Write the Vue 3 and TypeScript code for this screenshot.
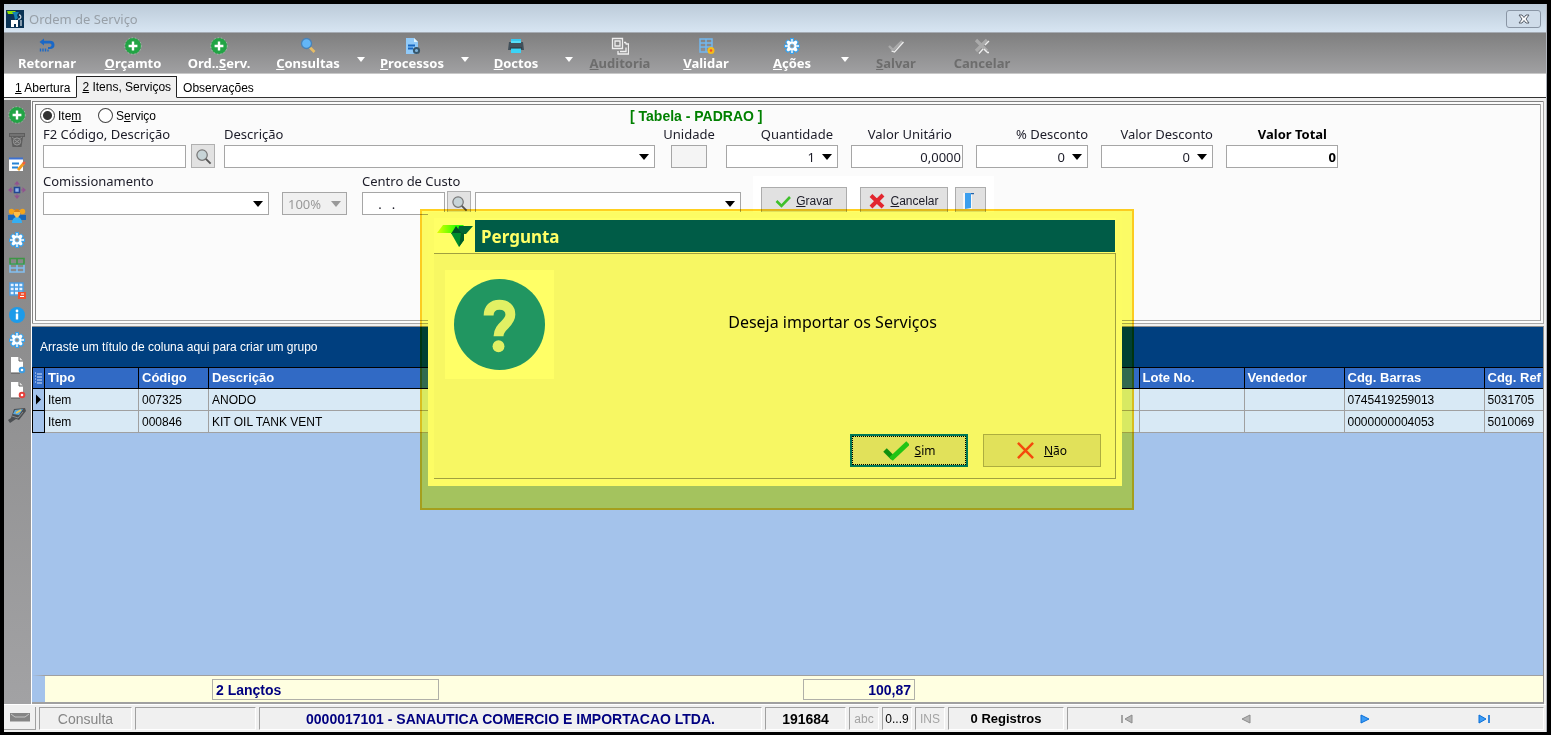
<script setup lang="ts">
import { ref } from 'vue'

interface Tool {
  icon: string
  pre: string
  key: string
  post: string
  menu?: boolean
  off?: boolean
  shift?: boolean
}

interface Row {
  tipo: string
  codigo: string
  descricao: string
  barras: string
  referencia: string
}

const plus =
  '<circle cx="9" cy="9" r="8" fill="#22a445"/><circle cx="9" cy="9" r="8.3" fill="none" stroke="#9fd3ac" stroke-width=".8" stroke-dasharray="1.4 2"/><path d="M9 4.6v8.8M4.6 9h8.8" stroke="#fff" stroke-width="2.4"/>'

const page = '<path d="M3 1h8l4 4v12H3z" fill="#fff"/><path d="M11 1v4h4" fill="#ddd" stroke="#555" stroke-width=".9"/><path d="M3 17h9" stroke="#555"/>'

const icons: Record<string, string> = {
  app: '<path d="M0 0h18v18H0z" fill="#0a3355"/><path d="M1 1h9l-3 3H2z" fill="#8ee000"/><path d="M6 2h7l-2 3 1 3-3 2-1-5z" fill="#1583b5"/><path d="M5 10h7v7h-2v-3H8v3H5z" fill="#fff"/><path d="M12 9c3 1 4-4 1-4M15 10v6" fill="none" stroke="#c9d5df" stroke-width="1.300"/>',
  back: '<path d="M6 1.500L1.500 5 6 8.500V6.400h6a1.500 1.500 0 0 1 1.500 1.500c0 1.500-1 2-2.500 2h-1v2h2c2.800 0 4.500-1.400 4.500-4S14.800 3.700 12 3.700H6z" fill="#1a68c7"/><path d="M2.500 11.500v3M5 11.500v3M7.500 11.500v3M10 12.500v2" stroke="#1a68c7" stroke-width="1.400"/>',
  plus,
  search: '<path d="M10.500 10l5 5" stroke="#e7bc64" stroke-width="2.600"/><circle cx="7.500" cy="6.500" r="5" fill="#63b6f7" stroke="#4b83b6" stroke-width="1.300"/>',
  doc: '<path d="M3 1h8l4 4v12H3z" fill="#90caf9"/><path d="M11 1v4h4z" fill="#e1f5fe"/><path d="M5 8.500h7M5 11.500h5" stroke="#1767c0" stroke-width="1.800"/><circle cx="13.500" cy="13.500" r="2.600" fill="#7fb2d8" stroke="#37566b" stroke-width="2"/>',
  printer: '<path d="M4 2h10v4H4z" fill="#37c8ef"/><path d="M2 5h14l1 8H1z" fill="#42505a"/><path d="M4 4h10v2H4z" fill="#56dcf5"/><path d="M4 11h10v5H4z" fill="#3bd3f5"/><path d="M3 11h12" stroke="#263238"/>',
  audit: '<path d="M1.500 1.500h10v10h-10zM4 4h5v5H4zM13 5.500h2M15 5.500v2M7 14v3h10.500V7H15M9 14.500h6v-4" fill="none" stroke="#eee" stroke-width="1.300"/>',
  grid: '<path d="M3 2h12v13H3zM9 2v13M3 6h12M3 10h12" fill="none" stroke="#72b8ef" stroke-width="1.500"/><circle cx="14" cy="13.500" r="2.400" fill="#f04b2f" stroke="#f5bc18" stroke-width="2.200"/>',
  gear: '<path d="M7 1h4v3l2.500-1.500 2.500 2.500-1.500 2.500H17v3.500h-2.500L16 13.500 13.500 16 11 14.500V17H7v-2.500L4.500 16 2 13.500 3.500 11H1V7.500h2.500L2 5l2.500-2.500L7 4z" fill="#3aa2ec"/><path d="M8.300 2h1.400v3l3.300-1.500 1.500 1.500L13 8.300h3v1.400h-3l1.500 3.300-1.500 1.500L9.700 13v3H8.300v-3L5 14.500 3.500 13 5 9.700H2V8.300h3L3.500 5 5 3.500 8.300 5z" fill="#fff"/><circle cx="9" cy="9" r="4" fill="#fff"/><circle cx="9" cy="9" r="2" fill="#8b8b8b" stroke="#5cb1ee" stroke-width=".8"/>',
  okOff: '<path d="M2 9l4 4 9-9" fill="none" stroke="#aaa" stroke-width="2.400"/><path d="M4.500 14l3 1 9-10" fill="none" stroke="#eee" stroke-width="1.300"/>',
  noOff: '<path d="M3 3l11 11M14 3L3 14" stroke="#aaa" stroke-width="3.200"/><path d="M6 16.500l4-4.500M12 8l4-4M11 12l3.500 3.500h1.500" fill="none" stroke="#eee" stroke-width="1.300"/>',
  trash: '<path d="M1 2h16v4h-2l-1.500 10h-9L3 6H1z" fill="#5d5d5d"/><path d="M2 4h14M4 6l4 3M14 6l-4 3" stroke="#888"/><circle cx="9" cy="10.500" r="3.600" fill="#666" stroke="#999"/><path d="M7 9l4 3M11 9l-4 3" stroke="#999"/>',
  edit: '<path d="M1 2h14v13H1z" fill="#fff"/><path d="M1 1.500h14v2H1z" fill="#3d70d0"/><path d="M4 7.500h7M4 11.500h6" stroke="#2783d6" stroke-width="2"/><path d="M10 14l6-7" stroke="#f29b20" stroke-width="2.800"/><path d="M15 8l2-2" stroke="#f25b40" stroke-width="2.400"/>',
  move: '<path d="M6.500 6.500h5v5h-5z" fill="#92b4ed" stroke="#234693" stroke-width="1.600"/><path d="M9 0l3 3.500H6zM9 18l3-3.500H6zM0 9l3.500-3v6zM18 9l-3.500-3v6z" fill="#91548f"/><path d="M9 3v2M9 13v2M3 9h2M13 9h2" stroke="#91548f"/>',
  people: '<circle cx="3.500" cy="5.500" r="2.700" fill="#f3a51c"/><circle cx="14.500" cy="5.500" r="2.700" fill="#f3a51c"/><path d="M0 14V9h7v5zM11 14V9h7v5z" fill="#1767bb"/><path d="M4 17c0-8 10-8 10 0z" fill="#36aef1"/><path d="M6 4h6v5l-3 3-3-3z" fill="#fdbf49"/><path d="M6 6a3 3 0 0 1 6 0z" fill="#d98218"/>',
  cells: '<path d="M2 8h14v8H2zM9 8v8M2 12h14" fill="none" stroke="#82bff0" stroke-width="1.600"/><path d="M2 2.500h14v5.500H2zM9 2.500V8" fill="none" stroke="#3c9644" stroke-width="1.600"/>',
  cellsDel: '<path d="M2 2h13v12H2z" fill="#e8f3fd"/><path d="M2 2h13v12H2zM6.300 2v12M10.700 2v12M2 6h13M2 10h13" fill="none" stroke="#4a9de2" stroke-width="1.400"/><path d="M10 11h8v7h-8z" fill="#f1502f"/><path d="M12 15.500h4M13 13h3" stroke="#fff" stroke-width="1.200"/>',
  info: '<circle cx="9" cy="9" r="8" fill="#1e9be9"/><circle cx="9" cy="5" r="1.400" fill="#fff"/><path d="M9 7.500v6" stroke="#fff" stroke-width="2.400"/>',
  pageGear: page + '<circle cx="14" cy="14" r="2.300" fill="#fff" stroke="#3d9be0" stroke-width="2"/>',
  pageRed: page + '<circle cx="14" cy="14" r="2.300" fill="#fff" stroke="#e5403c" stroke-width="2"/>',
  device: '<path d="M0 14l3-2 3-9 11-1 1 3-7 9-3-1-6 4z" fill="#4c4f52"/><path d="M7 4l8-1-4 6-6-1z" fill="#55a7e0"/><path d="M8 7l5-3" stroke="#eac454" stroke-width="1.600"/><path d="M4 10l6 2 5-6" fill="none" stroke="#888"/>',
}

const tools: Tool[] = [
  { icon: 'back', pre: 'Retornar', key: '', post: '' },
  { icon: 'plus', pre: '', key: 'O', post: 'rçamto' },
  { icon: 'plus', pre: 'Ord..', key: 'S', post: 'erv.' },
  { icon: 'search', pre: '', key: 'C', post: 'onsultas', menu: true, shift: true },
  { icon: 'doc', pre: '', key: 'P', post: 'rocessos', menu: true },
  { icon: 'printer', pre: '', key: 'D', post: 'octos', menu: true },
  { icon: 'audit', pre: '', key: 'A', post: 'uditoria', off: true },
  { icon: 'grid', pre: '', key: 'V', post: 'alidar' },
  { icon: 'gear', pre: '', key: 'A', post: 'ções', menu: true },
  { icon: 'okOff', pre: '', key: 'S', post: 'alvar', off: true },
  { icon: 'noOff', pre: 'Cancelar', key: '', post: '', off: true },
]

const side = [
  { icon: 'plus', name: 'Incluir' },
  { icon: 'trash', name: 'Excluir' },
  { icon: 'edit', name: 'Editar' },
  { icon: 'move', name: 'Mover' },
  { icon: 'people', name: 'Equipe' },
  { icon: 'gear', name: 'Configurar' },
  { icon: 'cells', name: 'Grade' },
  { icon: 'cellsDel', name: 'Limpar grade' },
  { icon: 'info', name: 'Informações' },
  { icon: 'gear', name: 'Opções' },
  { icon: 'pageGear', name: 'Documento' },
  { icon: 'pageRed', name: 'Remover documento' },
  { icon: 'device', name: 'Coletor' },
]

const rows: Row[] = [
  { tipo: 'Item', codigo: '007325', descricao: 'ANODO', barras: '0745419259013', referencia: '5031705' },
  { tipo: 'Item', codigo: '000846', descricao: 'KIT OIL TANK VENT', barras: '0000000004053', referencia: '5010069' },
]

const kind = ref('item')
const code = ref('')
const unit = ref('')
const cost = ref('   .   .')
const unitValue = ref('0,0000')
const total = ref('0')
</script>

<template>
  <div class="screen">
    <main class="window">
      <header class="titlebar">
        <svg class="app-icon" viewBox="0 0 18 18" v-html="icons.app"></svg>
        <h1>Ordem de Serviço</h1>
        <button class="close" aria-label="Fechar">
          <svg viewBox="0 0 14 10"><path d="M2 1h3l2 2.500L9 1h3L9 5l3 4H9L7 6.500 5 9H2l3-4z" fill="#fff" stroke="#555d68" /></svg>
        </button>
      </header>

      <nav class="toolbar">
        <div v-for="(t, i) in tools" :key="i" class="tool" :class="{ shift: t.shift }">
          <button class="tool-btn" :disabled="t.off">
            <svg viewBox="0 0 18 18" v-html="icons[t.icon]"></svg>
            <span>{{ t.pre }}<u>{{ t.key }}</u>{{ t.post }}</span>
          </button>
          <button v-if="t.menu" class="tool-menu" :aria-label="'Menu ' + t.key + t.post"></button>
        </div>
      </nav>

      <div class="tabs" role="tablist">
        <button role="tab"><u>1</u> Abertura</button>
        <button role="tab" class="active" aria-selected="true"><u>2</u> Itens, Serviços</button>
        <button role="tab">Observações</button>
      </div>

      <div class="body">
        <aside class="side">
          <button v-for="(s, i) in side" :key="i" :aria-label="s.name">
            <svg viewBox="0 0 18 18" v-html="icons[s.icon]"></svg>
          </button>
        </aside>

        <div class="content">
          <section class="panel">
            <div class="kinds">
              <label><input v-model="kind" type="radio" name="kind" value="item" />Ite<u>m</u></label>
              <label><input v-model="kind" type="radio" name="kind" value="servico" />S<u>e</u>rviço</label>
              <strong>[ Tabela - PADRAO ]</strong>
            </div>

            <div class="fields">
              <div class="field w-code">
                <label for="code">F2 Código, Descrição</label>
                <input id="code" v-model="code" type="text" />
              </div>
              <button class="lookup after-code" aria-label="Pesquisar item">
                <svg viewBox="0 0 18 18"><circle cx="7.500" cy="7.500" r="5.500" fill="#c7d4d7" stroke="#777" stroke-width="1.300" /><path d="M11.500 11.500l5 5" stroke="#555" stroke-width="2" /></svg>
              </button>
              <div class="field w-desc">
                <label for="desc">Descrição</label>
                <div class="combo"><select id="desc"><option></option></select></div>
              </div>
              <div class="field w-unit">
                <label for="unit">Unidade</label>
                <input id="unit" v-model="unit" type="text" disabled />
              </div>
              <div class="field w-num lbl-in">
                <label for="qty">Quantidade</label>
                <div class="combo num"><select id="qty"><option>1</option></select></div>
              </div>
              <div class="field w-num lbl-far">
                <label for="price">Valor Unitário</label>
                <input id="price" v-model="unitValue" type="text" class="num" />
              </div>
              <div class="field w-num">
                <label for="pct">% Desconto</label>
                <div class="combo num"><select id="pct"><option>0</option></select></div>
              </div>
              <div class="field w-num">
                <label for="disc">Valor Desconto</label>
                <div class="combo num"><select id="disc"><option>0</option></select></div>
              </div>
              <div class="field w-num lbl-far bold">
                <label for="total">Valor Total</label>
                <input id="total" v-model="total" type="text" class="num" />
              </div>
            </div>

            <div class="fields second">
              <div class="field w-com">
                <label for="com">Comissionamento</label>
                <div class="combo"><select id="com"><option></option></select></div>
              </div>
              <div class="field w-pct">
                <div class="combo off"><select aria-label="Percentual" disabled><option>100%</option></select></div>
              </div>
              <div class="field w-cost">
                <label for="cost">Centro de Custo</label>
                <input id="cost" v-model="cost" type="text" />
              </div>
              <button class="lookup after-cost" aria-label="Pesquisar centro de custo">
                <svg viewBox="0 0 18 18"><circle cx="7.500" cy="7.500" r="5.500" fill="#c7d4d7" stroke="#777" stroke-width="1.300" /><path d="M11.500 11.500l5 5" stroke="#555" stroke-width="2" /></svg>
              </button>
              <div class="field w-center">
                <div class="combo"><select aria-label="Centro de Custo, nome"><option></option></select></div>
              </div>
              <div class="actions">
                <button class="save">
                  <svg viewBox="0 0 16 16"><path d="M1.500 8l5 5L15 4" fill="none" stroke="#3fc02b" stroke-width="2.600" /></svg>
                  <span><u>G</u>ravar</span>
                </button>
                <button class="cancel">
                  <svg viewBox="0 0 16 16"><path d="M2 2.500l12 11.500M14 2L2 14" stroke="#e2262e" stroke-width="4" /></svg>
                  <span><u>C</u>ancelar</span>
                </button>
                <button class="door" aria-label="Sair">
                  <svg viewBox="0 0 16 16"><path d="M0 0h9v16H0z" fill="#f8f8f8" /><path d="M2 .5h9" stroke="#2663a8" stroke-width="1.500" /><path d="M2 0h6v15l-6 1z" fill="#3c9fee" /></svg>
                </button>
              </div>
            </div>
          </section>

          <section class="grid">
            <div class="groupbar">Arraste um título de coluna aqui para criar um grupo</div>
            <table>
              <colgroup>
                <col class="c-mark" /><col class="c-tipo" /><col class="c-cod" /><col />
                <col class="c-lote" /><col class="c-vend" /><col class="c-bar" /><col class="c-ref" />
              </colgroup>
              <thead>
                <tr>
                  <th class="mark"><svg viewBox="0 0 9 13"><path d="M1 1h1M1 4h1M1 7h1M1 10h1M3 2h5M3 5h5M3 8h5M3 11h5" stroke="#dbe5f8" /></svg></th>
                  <th>Tipo</th><th>Código</th><th>Descrição</th><th>Lote No.</th><th>Vendedor</th><th>Cdg. Barras</th><th>Cdg. Ref</th>
                </tr>
              </thead>
              <tbody>
                <tr v-for="(r, i) in rows" :key="r.codigo">
                  <td class="mark"><svg v-if="i === 0" viewBox="0 0 9 13"><path d="M2 1.500l5 5-5 5z" /></svg></td>
                  <td>{{ r.tipo }}</td><td>{{ r.codigo }}</td><td>{{ r.descricao }}</td><td></td><td></td><td>{{ r.barras }}</td><td>{{ r.referencia }}</td>
                </tr>
              </tbody>
            </table>
            <div class="summary">
              <output class="count">2 Lançtos</output>
              <output class="sum">100,87</output>
            </div>
          </section>
        </div>
      </div>

      <footer class="status">
        <button class="st-icon" aria-label="Painel">
          <svg viewBox="0 0 20 10"><path d="M0 0h20v8H0z" fill="#858585" /><path d="M1 1l4 3h10l4-3" fill="none" stroke="#c4c4c4" /><path d="M0 8.500h20" stroke="#bbb" /></svg>
        </button>
        <span class="cell s-mode">Consulta</span>
        <span class="cell s-blank"></span>
        <span class="cell s-client">0000017101 - SANAUTICA COMERCIO E IMPORTACAO LTDA.</span>
        <span class="cell s-id">191684</span>
        <span class="cell s-key dim">abc</span>
        <span class="cell s-key">0...9</span>
        <span class="cell s-key dim">INS</span>
        <span class="cell s-reg">0 Registros</span>
        <div class="cell s-nav">
          <button disabled aria-label="Primeiro"><svg viewBox="0 0 14 12"><path d="M2 2v8" stroke="#8c8c8c" stroke-width="1.500" /><path d="M12 2v8L5 6z" fill="#b5b5b5" stroke="#8c8c8c" /></svg></button>
          <button disabled aria-label="Anterior"><svg viewBox="0 0 14 12"><path d="M11 2v8L3 6z" fill="#b5b5b5" stroke="#8c8c8c" /></svg></button>
          <button aria-label="Próximo"><svg viewBox="0 0 14 12"><path d="M3 2v8l8-4z" fill="#3c9cf5" stroke="#0a6fd8" /></svg></button>
          <button aria-label="Último"><svg viewBox="0 0 14 12"><path d="M2 2v8l7-4z" fill="#3c9cf5" stroke="#0a6fd8" /><path d="M12 2v8" stroke="#0a6fd8" stroke-width="1.600" /></svg></button>
        </div>
      </footer>

      <div class="dialog" role="dialog" aria-labelledby="dlg-title">
        <div class="dlg-head">
          <svg viewBox="0 0 36 24">
            <defs><linearGradient id="lime"><stop offset="0" stop-color="#e2ff00" /><stop offset=".75" stop-color="#28ff00" /></linearGradient></defs>
            <path d="M6 1h21l-7 8H0z" fill="url(#lime)" />
            <path d="M22 2h14l-7 8h-9z" fill="#006780" />
            <path d="M19 2l6 8H14z" fill="#005060" />
            <path d="M14 9h13v7l-5 7z" fill="#008c70" />
            <path d="M24 9h3v7l-5 7z" fill="#005b68" />
          </svg>
          <h2 id="dlg-title">Pergunta</h2>
        </div>
        <div class="dlg-body">
          <div class="ask">
            <svg viewBox="0 0 92 92">
              <circle cx="46" cy="46" r="46" fill="#2196f3" />
              <path d="M35 37c0-7 4-11 11-11s11 4 11 10c0 10-12 11-12 22" fill="none" stroke="#e1f0fa" stroke-width="10" />
              <circle cx="45" cy="68" r="6" fill="#e1f0fa" />
            </svg>
          </div>
          <p>Deseja importar os Serviços</p>
          <div class="answers">
            <button class="yes">
              <svg viewBox="0 0 26 20"><path d="M2 9l8 8" stroke="#119022" stroke-width="5" /><path d="M8 18L25 2" stroke="#22c432" stroke-width="5" /></svg>
              <span><u>S</u>im</span>
            </button>
            <button class="no">
              <svg viewBox="0 0 18 18"><path d="M1 1l16 16M17 1L1 17" stroke="#f44a1c" stroke-width="2.600" /></svg>
              <span><u>N</u>ão</span>
            </button>
          </div>
        </div>
      </div>
      <div class="marker"></div>
    </main>
  </div>
</template>

<style>
body {
  margin: 0;
  background: #000;
}
</style>

<style scoped>
* {
  box-sizing: border-box;
}
button,
input,
select {
  margin: 0;
  padding: 0;
  border: 0;
  border-radius: 0;
  font: inherit;
  color: inherit;
  background: none;
}
svg {
  display: block;
  flex: none;
}
.screen {
  display: flex;
  min-height: 100vh;
  padding: 4px 4px 3px;
  background: #000;
  font: 12px/16px "Liberation Sans", Arial, sans-serif;
  color: #000;
}
.window {
  position: relative;
  isolation: isolate;
  flex: 1;
  min-width: 0;
  display: flex;
  flex-direction: column;
  background: #f0f0f0;
  border-right: 1px solid #b0b4bc;
}
.titlebar {
  display: flex;
  align-items: center;
  gap: 5px;
  height: 28px;
  padding: 2px 5px 0 2px;
  background: linear-gradient(#bccbd9, #d7e5f2);
}
.app-icon {
  width: 18px;
  height: 18px;
}
h1 {
  flex: 1;
  margin: 0;
  font: 13px/18px "Noto Sans", sans-serif;
  color: #98a0a8;
}
.close {
  display: flex;
  align-items: center;
  justify-content: center;
  width: 35px;
  height: 18px;
  border: 1px solid #8a96a5;
  border-radius: 3px;
  background: #cfdce9;
}
.close svg {
  width: 14px;
  height: 10px;
}
.toolbar {
  display: flex;
  height: 42px;
  border-top: 1px solid #a5abb3;
  border-bottom: 1px solid #c8c8c8;
  background: linear-gradient(#7f7f7f, #a0a0a2);
}
.tool {
  display: flex;
}
.tool.shift {
  margin-left: 3px;
}
.tool-btn {
  width: 86px;
  padding-top: 4px;
  display: flex;
  flex-direction: column;
  align-items: center;
  color: #fff;
  font: bold 13px/16px "Noto Sans", sans-serif;
}
.tool-btn svg {
  width: 18px;
  height: 18px;
}
.tool-btn:disabled {
  color: #6d6d6d;
}
.tool-menu {
  width: 18px;
  display: flex;
  align-items: center;
  padding-top: 17px;
}
.tool-menu::after {
  content: "";
  margin-left: 6px;
  border: 4px solid transparent;
  border-top: 5px solid #fff;
}
.tabs {
  display: flex;
  align-items: flex-end;
  height: 24px;
  background: #fff;
  border-bottom: 1px solid #333;
}
.tabs button {
  height: 19px;
  padding: 0 6px;
}
.tabs button:first-child {
  padding-left: 11px;
}
.tabs .active {
  height: 22px;
  padding: 0 5px;
  margin-bottom: -1px;
  background: #f0f0f0;
  border: 1px solid #222;
  border-bottom-color: #f0f0f0;
}
.body {
  flex: 1;
  display: flex;
  padding-top: 1px;
  min-height: 0;
}
.side {
  flex: none;
  width: 28px;
  padding-top: 2px;
  margin-top: 1px;
  background: linear-gradient(#808080, #a2a2a4);
  border-right: 1px solid #fff;
}
.side button {
  display: flex;
  align-items: center;
  justify-content: center;
  width: 25px;
  height: 25px;
}
.side svg {
  width: 18px;
  height: 18px;
}
.content {
  flex: 1;
  min-width: 0;
  display: flex;
  flex-direction: column;
  padding-right: 2px;
}
.panel {
  height: 223px;
  margin: 2px 0 0;
  border: 4px double #828282;
  border-right-color: #a8a8a8;
  border-bottom-color: #a8a8a8;
  background: #fbfbfb;
}
.kinds {
  display: flex;
  align-items: center;
  height: 21px;
  padding-left: 4px;
}
.kinds label {
  display: flex;
  align-items: center;
  width: 58px;
}
.kinds input {
  appearance: none;
  width: 15px;
  height: 15px;
  margin-right: 3px;
  border: 1px solid #444;
  border-radius: 50%;
  background: #fff;
}
.kinds input:checked {
  background: radial-gradient(circle, #333 4px, #fff 5px);
}
.kinds strong {
  margin-left: 474px;
  font-size: 14px;
  color: #008000;
}
.fields {
  display: flex;
  align-items: flex-end;
  height: 42px;
  padding-left: 7px;
  font: 13px/18px "Noto Sans", sans-serif;
  color: #1c1c28;
}
.fields.second {
  height: 47px;
}
.field {
  flex: none;
  display: flex;
  flex-direction: column;
}
.field label {
  height: 20px;
  white-space: nowrap;
}
.field input,
.combo select {
  width: 100%;
  height: 23px;
  border: 1px solid #a6a6a6;
  background: #fff;
  padding: 0 3px;
  font: inherit;
}
.field input:disabled {
  background: #f4f4f4;
}
.field input.num {
  text-align: right;
  padding-right: 1px;
}
.combo {
  position: relative;
}
.combo select {
  display: block;
  appearance: none;
  opacity: 1;
}
.combo.num select {
  text-align-last: right;
  padding-right: 22px;
}
.combo::after {
  content: "";
  position: absolute;
  right: 6px;
  top: 9px;
  border: 5px solid transparent;
  border-top: 6px solid #000;
  border-bottom: 0;
  pointer-events: none;
}
.combo.off select {
  padding-left: 5px;
  background: #f0f0f0;
  color: #999;
}
.combo.off::after {
  border-top-color: #999;
}
.w-code { width: 143px; }
.w-desc { width: 431px; margin-left: 9px; }
.w-unit { width: 36px; margin: 0 6px 0 16px; align-items: center; }
.w-num { width: 112px; margin-left: 13px; }
.w-num label { text-align: right; }
.lbl-in label { padding-right: 5px; }
.lbl-far label { padding-right: 11px; }
.bold { font-weight: bold; color: #000; }
.w-com { width: 226px; }
.w-pct { width: 65px; margin-left: 13px; }
.w-cost { width: 83px; margin-left: 15px; }
.w-cost input { white-space: pre; padding-left: 5px; }
.w-center { width: 266px; margin-left: 4px; }
.lookup {
  flex: none;
  display: flex;
  align-items: center;
  justify-content: center;
  width: 24px;
  height: 24px;
  border: 1px solid #b0b0b0;
  background: #e2e2e2;
}
.lookup svg {
  width: 17px;
  height: 17px;
}
.after-code { margin-left: 5px; }
.after-cost { margin-left: 2px; }
.actions {
  display: flex;
  height: 39px;
  margin-left: 12px;
  padding: 11px 8px 0;
  background: #fff;
  font: 12px/16px "Liberation Sans", Arial, sans-serif;
}
.actions button {
  display: flex;
  align-items: center;
  justify-content: center;
  gap: 5px;
  height: 28px;
  border: 1px solid #acacac;
  background: #e1e1e1;
}
.actions svg {
  width: 16px;
  height: 16px;
}
.save { width: 86px; margin-right: 13px; }
.cancel { width: 88px; margin-right: 7px; }
.door { width: 31px; }
.grid {
  flex: 1;
  display: flex;
  flex-direction: column;
  margin-top: 2px;
  border: 1px solid #8f8f8f;
  border-left: 0;
  border-bottom: 2px solid #a0a0a0;
  background: #a4c3eb;
}
.groupbar {
  display: flex;
  align-items: center;
  height: 40px;
  padding-left: 8px;
  background: #003f7f;
  color: #fff;
}
table {
  width: 100%;
  table-layout: fixed;
  border-collapse: collapse;
}
.c-mark { width: 12px; }
.c-tipo { width: 94px; }
.c-cod { width: 70px; }
.c-lote { width: 105px; }
.c-vend { width: 100px; }
.c-bar { width: 140px; }
.c-ref { width: 59px; }
th {
  height: 21px;
  padding: 0 3px;
  border: 1px solid #000;
  background: #316ac5;
  color: #fff;
  font-size: 13px;
  text-align: left;
  white-space: nowrap;
  overflow: hidden;
}
td {
  height: 22px;
  padding: 0 3px;
  border: 1px solid #a0a0a0;
  background: #d8e9f5;
  white-space: nowrap;
  overflow: hidden;
}
th:last-child,
td:last-child {
  border-right: 0;
}
th.mark,
td.mark {
  padding: 0 1px;
}
td.mark {
  border-color: #000;
  background: #a4c3eb;
}
.mark svg {
  width: 9px;
  height: 13px;
}
.summary {
  display: flex;
  align-items: center;
  height: 27px;
  margin-top: auto;
  padding-left: 167px;
  border-top: 1px solid #a0a0a0;
  border-left: 13px solid #a4c3eb;
  background: #ffffe1;
}
.summary output {
  height: 21px;
  padding: 1px 3px;
  border: 1px solid #b0b0a8;
  font: bold 14px/18px "Liberation Sans", Arial, sans-serif;
  color: #000080;
}
.count { width: 227px; }
.sum { width: 112px; margin-left: 364px; text-align: right; }
.status {
  display: flex;
  gap: 3px;
  height: 28px;
  padding: 2px 2px 2px 0;
  border-top: 1px solid #fff;
  background: #f0f0f0;
}
.st-icon {
  display: flex;
  align-items: center;
  justify-content: center;
  width: 32px;
  border-right: 1px solid #a0a0a0;
  border-bottom: 1px solid #a0a0a0;
}
.st-icon svg {
  width: 20px;
  height: 10px;
}
.cell {
  flex: none;
  display: flex;
  align-items: center;
  justify-content: center;
  border: 1px solid #fff;
  border-top-color: #a0a0a0;
  border-left-color: #a0a0a0;
  white-space: nowrap;
  font-size: 13px;
}
.s-mode { width: 93px; color: #868686; font-size: 14px; }
.s-blank { width: 121px; }
.s-client { width: 503px; color: #000080; font-weight: bold; font-size: 14px; }
.s-id { width: 81px; font-weight: bold; font-size: 14px; }
.s-key { width: 30px; font-size: 12px; }
.dim { color: #a3a3a3; }
.s-reg { width: 116px; font-weight: bold; }
.s-nav { flex: 1; min-width: 0; }
.s-nav button {
  flex: 1;
  display: flex;
  justify-content: center;
}
.s-nav svg {
  width: 14px;
  height: 12px;
}
.dialog {
  position: absolute;
  left: calc(50% - 347px);
  top: 208px;
  width: 694px;
  height: 274px;
  padding: 6px;
  background: #fcfcfa;
}
.dlg-head {
  display: flex;
  align-items: center;
  height: 36px;
  background: #fff;
  border-bottom: 1px solid #a0a0a0;
}
.dlg-head svg {
  width: 36px;
  height: 24px;
  margin: 0 2px 0 3px;
}
h2 {
  flex: 1;
  height: 32px;
  margin: 0 1px 0 0;
  padding-left: 6px;
  background: #005cb2;
  color: #fff;
  font: bold 17px/33px "Noto Sans", sans-serif;
}
.dlg-body {
  display: flex;
  height: 225px;
  border-right: 1px solid #a0a0a0;
  border-bottom: 1px solid #a0a0a0;
  background: #f7f7f7;
  position: relative;
}
.ask {
  flex: none;
  width: 109px;
  height: 109px;
  margin: 16px 0 0 11px;
  padding: 9px;
  background: #fff;
}
.ask svg {
  width: 91px;
  height: 91px;
}
.dlg-body p {
  flex: 1;
  margin: 56px 0 0;
  padding-right: 4px;
  text-align: center;
  font: 16px/24px "Noto Sans", sans-serif;
}
.answers {
  position: absolute;
  right: 14px;
  bottom: 11px;
  display: flex;
  gap: 15px;
  font: 12px/16px "Noto Sans", sans-serif;
}
.answers button {
  display: flex;
  align-items: center;
  justify-content: center;
  width: 118px;
  height: 33px;
  border: 1px solid #adad9c;
  background: #e1e1e1;
}
.answers .yes {
  gap: 6px;
  border: 2px solid #0078d7;
  outline: 1px dotted #000;
  outline-offset: -3px;
}
.answers .no {
  gap: 10px;
}
.yes svg {
  width: 26px;
  height: 20px;
}
.no svg {
  width: 17px;
  height: 17px;
}
.marker {
  position: absolute;
  left: calc(50% - 355px);
  top: 205px;
  width: 714px;
  height: 301px;
  border: 2px solid #ffd020;
  background: #ffff66;
  mix-blend-mode: multiply;
  pointer-events: none;
}
</style>
